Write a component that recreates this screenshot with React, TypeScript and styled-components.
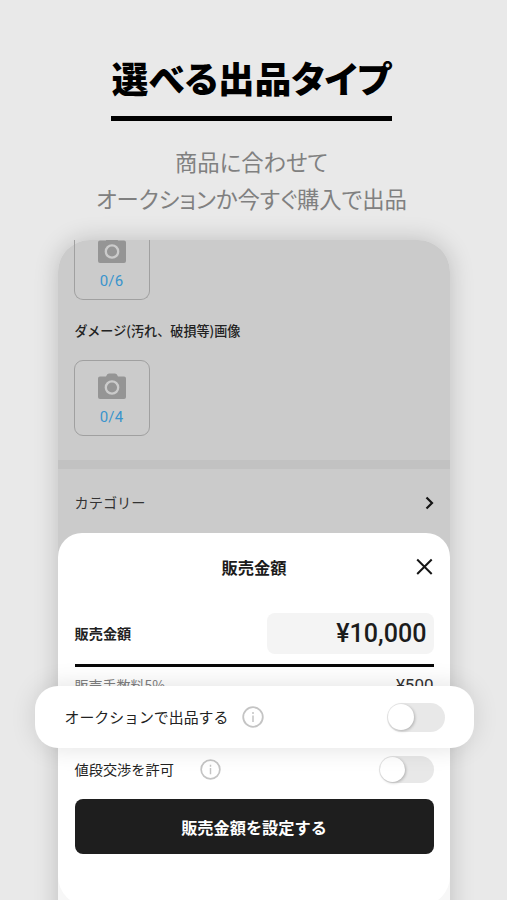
import React from 'react';
import styled, { createGlobalStyle } from 'styled-components';

const GlobalStyle = createGlobalStyle`
  * { box-sizing: border-box; }
  html, body { margin: 0; padding: 0; background: #e9e9e9; overflow: hidden; }
  body { font-family: "Noto Sans CJK JP", "Noto Sans", sans-serif; color: #222; }
`;

const Page = styled.main`
  width: 507px;
  height: 900px;
  overflow: hidden;
  background: #e9e9e9;
  display: flex;
  flex-direction: column;
  align-items: center;
`;

const Header = styled.header`
  flex: none;
  height: 240px;
  padding: 51px 4px 0 0;
  display: flex;
  flex-direction: column;
  align-items: center;
  white-space: nowrap;
`;

const Title = styled.h1`
  margin: 0;
  width: 281px;
  height: 70px;
  border-bottom: 5px solid #000;
  display: flex;
  justify-content: center;
  font-size: 36.6px;
  line-height: 53px;
  font-weight: 900;
  font-feature-settings: "palt";
  color: #000;
`;

const Subtitle = styled.p`
  margin: 22px 0 0;
  font-size: 22.35px;
  line-height: 37px;
  text-align: center;
  font-feature-settings: "palt";
  color: #808080;
`;

const Phone = styled.section`
  flex: none;
  width: 392px;
  height: 720px;
  border-radius: 32px 32px 0 0;
  background: linear-gradient(#cbcbcb 400px, #f7f7f7 400px);
  box-shadow: 0 0 24px rgba(0, 0, 0, 0.19);
`;

const Listing = styled.div`
  height: 293px;
  display: flex;
  flex-direction: column;
  overflow: hidden;
`;

const Photo = styled.div<{ $clipped?: boolean }>`
  flex: none;
  width: 76px;
  height: ${(p) => (p.$clipped ? 60 : 76)}px;
  margin-left: 16px;
  border: 1px solid #a0a0a0;
  border-top-width: ${(p) => (p.$clipped ? 0 : 1)}px;
  border-radius: ${(p) => (p.$clipped ? '0 0 9px 9px' : '9px')};
  display: flex;
  flex-direction: column;
  align-items: center;
  justify-content: flex-end;
  overflow: hidden;
`;

const CameraSvg = styled.svg`
  flex: none;
  width: 28px;
  height: 26px;
`;

const Count = styled.span`
  flex: none;
  margin-top: 8px;
  height: 28px;
  font: 400 15px/21px Roboto, sans-serif;
  letter-spacing: 0.1px;
  color: #3994cd;
`;

const DamageLabel = styled.div`
  height: 60px;
  padding: 1px 0 0 17px;
  font-size: 13.1px;
  line-height: 60px;
  font-weight: 500;
  color: #222;
  white-space: nowrap;
`;

const Divider = styled.div`
  margin-top: 24px;
  height: 9px;
  flex: none;
  background: #c2c2c2;
`;

const Category = styled.div`
  height: 66px;
  padding: 3px 16px 0 17px;
  display: flex;
  align-items: center;
  justify-content: space-between;
  font-size: 14.2px;
  color: #333;
`;

const CategoryName = styled.span`
  padding-bottom: 2px;
`;

const Sheet = styled.div`
  height: 373px;
  padding: 0 16px 0 17px;
  background: #fff;
  border-radius: 24px 24px 30px 30px;
`;

const SheetHeader = styled.div`
  height: 80px;
  padding-top: 1px;
  display: grid;
  grid-template-columns: 1fr auto 1fr;
  align-items: start;
  line-height: 66px;
`;

const SheetTitle = styled.h2`
  grid-column: 2;
  margin: 0;
  font-size: 16.3px;
  font-weight: 700;
  color: #1b1b1b;
`;

const CloseButton = styled.button`
  justify-self: end;
  width: 18px;
  height: 18px;
  margin-top: 24px;
  padding: 0;
  border: 0;
  background: none;
  display: flex;
`;

const PriceRow = styled.div`
  height: 54px;
  border-bottom: 3px solid #080808;
  display: flex;
  justify-content: space-between;
  align-items: flex-start;
  font-size: 14.2px;
  line-height: 41px;
  font-weight: 700;
  color: #222;
`;

const PriceField = styled.div`
  width: 167px;
  height: 41px;
  padding-right: 7px;
  border-radius: 8px;
  background: #f4f4f4;
  text-align: right;
  font: 500 25.1px/41px Roboto, sans-serif;
  color: #1c1c1c;
`;

const FeeRow = styled.div`
  height: 19px;
  padding-top: 8px;
  display: flex;
  justify-content: space-between;
  font-size: 14px;
  line-height: 20px;
  color: #808080;
`;

const Fee = styled.span`
  font: 400 17px/21px Roboto, sans-serif;
  color: #333;
`;

const AuctionCard = styled.div`
  position: relative;
  width: 439px;
  height: 62px;
  margin-left: -40px;
  padding: 0 29px 0 30px;
  border-radius: 23px;
  background: #fff;
  box-shadow: 0 0 26px rgba(0, 0, 0, 0.12);
  display: flex;
  align-items: center;
  font-size: 14.9px;
  color: #222;
  white-space: nowrap;
`;

const OptionRow = styled.div`
  height: 43px;
  display: flex;
  align-items: center;
  font-size: 14.2px;
  color: #222;
`;

const OptionText = styled.span<{ $width: number }>`
  width: ${(p) => p.$width}px;
  padding-bottom: 1px;
`;

const InfoSvg = styled.svg<{ $size: number }>`
  width: ${(p) => p.$size}px;
  height: ${(p) => p.$size}px;
`;

const Toggle = styled.div<{ $large?: boolean }>`
  margin-left: auto;
  width: ${(p) => (p.$large ? 58 : 55)}px;
  height: ${(p) => (p.$large ? 29 : 27)}px;
  padding: 1px;
  border-radius: 15px;
  background: #e8e8e8;
`;

const Knob = styled.div<{ $large?: boolean }>`
  width: ${(p) => (p.$large ? 26 : 25)}px;
  height: ${(p) => (p.$large ? 26 : 25)}px;
  border-radius: 50%;
  background: #fff;
  box-shadow: 1px 1px 3px rgba(0, 0, 0, 0.24);
`;

const SubmitButton = styled.button`
  display: block;
  width: 359px;
  height: 55px;
  margin-top: 8px;
  padding: 1px 0 0;
  border: 0;
  border-radius: 8px;
  background: #1e1e1e;
  color: #fff;
  font: 700 16.2px/54px "Noto Sans CJK JP", sans-serif;
`;

const Camera = () => (
  <CameraSvg viewBox="0 0 28 26">
    <path d="M2 3.500h6q1-3 3-3h6q2 0 3 3h6a2 2 0 0 1 2 2V24a2 2 0 0 1-2 2H2a2 2 0 0 1-2-2V5.500a2 2 0 0 1 2-2Z" fill="#959595" />
    <circle cx="14" cy="14.500" r="6.200" fill="none" stroke="#cbcbcb" strokeWidth="2.300" />
  </CameraSvg>
);

const Info = ({ size }: { size: number }) => (
  <InfoSvg $size={size} viewBox="0 0 22 22" fill="none" stroke="#c4c4c4">
    <circle cx="11" cy="11" r="9.800" strokeWidth="1.800" />
    <path d="M11 9.500V16M11 6v2" strokeWidth="1.500" />
  </InfoSvg>
);

export default function App() {
  return (
    <>
      <GlobalStyle />
      <Page>
        <Header>
          <Title>選べる出品タイプ</Title>
          <Subtitle>
            商品に合わせて
            <br />
            オークションか今すぐ購入で出品
          </Subtitle>
        </Header>
        <Phone>
          <Listing>
            <Photo $clipped>
              <Camera />
              <Count>0/6</Count>
            </Photo>
            <DamageLabel>ダメージ(汚れ、破損等)画像</DamageLabel>
            <Photo>
              <Camera />
              <Count>0/4</Count>
            </Photo>
            <Divider />
            <Category>
              <CategoryName>カテゴリー</CategoryName>
              <svg width="9" height="14" viewBox="0 0 9 14" fill="none" stroke="#161616" strokeWidth="2.200">
                <path d="m1.500 1.500 5.500 5.500-5.500 5.500" />
              </svg>
            </Category>
          </Listing>
          <Sheet>
            <SheetHeader>
              <SheetTitle>販売金額</SheetTitle>
              <CloseButton aria-label="閉じる">
                <svg width="18" height="18" viewBox="0 0 18 18" stroke="#161616" strokeWidth="2">
                  <path d="m1.200 1.500 14.500 14.500M15.700 1.500 1.200 16" />
                </svg>
              </CloseButton>
            </SheetHeader>
            <PriceRow>
              <span>販売金額</span>
              <PriceField>¥10,000</PriceField>
            </PriceRow>
            <FeeRow>
              <span>販売手数料5%</span>
              <Fee>¥500</Fee>
            </FeeRow>
            <AuctionCard>
              <OptionText $width={177}>オークションで出品する</OptionText>
              <Info size={22} />
              <Toggle $large>
                <Knob $large />
              </Toggle>
            </AuctionCard>
            <OptionRow>
              <OptionText $width={125}>値段交渉を許可</OptionText>
              <Info size={21} />
              <Toggle>
                <Knob />
              </Toggle>
            </OptionRow>
            <SubmitButton>販売金額を設定する</SubmitButton>
          </Sheet>
        </Phone>
      </Page>
    </>
  );
}
